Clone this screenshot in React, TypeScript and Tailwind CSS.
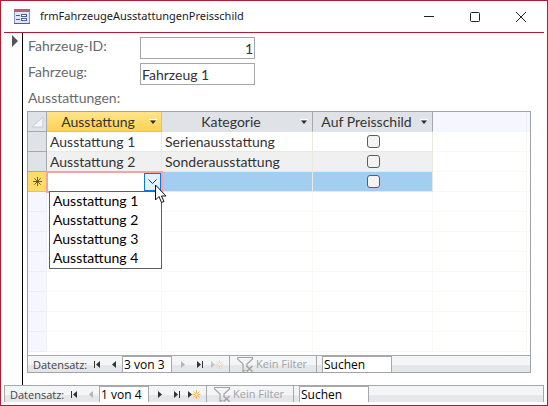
import { useState } from "react";

const options = [
  "Ausstattung 1",
  "Ausstattung 2",
  "Ausstattung 3",
  "Ausstattung 4",
];

const rows = [
  { name: "Ausstattung 1", category: "Serienausstattung" },
  { name: "Ausstattung 2", category: "Sonderausstattung" },
];

const emptyRows = [1, 2, 3, 4, 5, 6, 7, 8];

const FormIcon = () => (
  <svg width="16" height="16" viewBox="0 0 16 16">
    <rect x="0" y="0" width="16" height="15" fill="#8695bb" />
    <rect x="0" y="0" width="16" height="3" fill="#c9567f" />
    <rect x="1" y="3" width="14" height="11" fill="#dfe7f6" />
    <path d="M2 6.500h4M2 10.500h4" stroke="#4a5f96" />
    <rect x="7.500" y="5.500" width="5" height="2" fill="#fff" stroke="#4c6199" />
    <rect x="7.500" y="9.500" width="5" height="2" fill="#fff" stroke="#4c6199" />
    <rect x="0" y="14" width="16" height="1" fill="#4d5f8e" />
  </svg>
);

const SortArrow = () => (
  <svg width="8" height="6" viewBox="0 0 8 6">
    <path d="M0 0.5h8" stroke="#fff" />
    <path d="M1 1.500h6L4 5z" fill="#222b3a" />
  </svg>
);

const NewRecordIcon = ({ disabled }: { disabled?: boolean }) => (
  <svg width="13" height="9" viewBox="0 0 13 9" opacity={disabled ? 0.4 : 1}>
    <path d="M0 1v7l4-3.500z" fill={disabled ? "#888" : "#333"} />
    <path
      d="M8.500 0v9M4.500 4.500h8M5.500 1.500l6 6M11.500 1.500l-6 6"
      stroke="#e8b056"
      strokeWidth="0.900"
    />
    <circle cx="8.500" cy="4.500" r="1.600" fill="#fff3d0" stroke="#e8b056" strokeWidth="0.600" />
  </svg>
);

const FilterIcon = () => (
  <svg width="17" height="16" viewBox="0 0 17 16" fill="none">
    <path
      d="M0.500 1.500h15v1.500l-5.500 5v2M0.500 1.500v1.500l5.500 5v7.500l2.500-1.500"
      stroke="#a3a3a3"
      strokeWidth="1.200"
    />
    <path d="M9.500 10l6 5.500M15.500 10l-6 5.500" stroke="#a3a3a3" strokeWidth="1.600" />
  </svg>
);

type NavigatorProps = {
  id: string;
  position: string;
  atStart?: boolean;
  atEnd?: boolean;
};

const RecordNavigator = ({ id, position, atStart, atEnd }: NavigatorProps) => {
  const [record, setRecord] = useState(position);
  const [search, setSearch] = useState("Suchen");

  return (
    <div className="flex h-4 items-stretch overflow-hidden bg-linear-to-b from-[#f3f5f7] from-55% to-[#e4e6ea] to-60% font-['Open_Sans',sans-serif] text-[11px] leading-[18px]">
      <label htmlFor={`${id}-record`} className="w-[66px] shrink-0 pl-[5px] text-[#444]">
        Datensatz:
      </label>
      <button type="button" aria-label="Erster Datensatz" className="flex w-4 shrink-0 items-center">
        <svg width="7" height="7" viewBox="0 0 7 7">
          <path d="M0 0h1v7H0zM6 0v7L2 3.500z" fill="#333" />
        </svg>
      </button>
      <button type="button" aria-label="Vorheriger Datensatz" className="flex w-3 shrink-0 items-center pl-[2px]">
        <svg width="4" height="7" viewBox="0 0 4 7">
          <path d="M4 0v7L0 3.500z" fill={atStart ? "#b5b5b5" : "#333"} />
        </svg>
      </button>
      <input
        id={`${id}-record`}
        value={record}
        onChange={(e) => setRecord(e.target.value)}
        className="h-[17px] w-[50px] shrink-0 border border-[#a6a8ac] bg-white px-px text-[12px] text-black outline-none"
      />
      <button type="button" aria-label="Nächster Datensatz" className="flex w-[25px] shrink-0 items-center pl-[9px]">
        <svg width="4" height="7" viewBox="0 0 4 7">
          <path d="M0 0v7l4-3.500z" fill={atEnd ? "#b5b5b5" : "#333"} />
        </svg>
      </button>
      <button type="button" aria-label="Letzter Datensatz" className="flex w-[14px] shrink-0 items-center">
        <svg width="7" height="7" viewBox="0 0 7 7">
          <path d="M0 0v7l4-3.500zM5 0h1v7H5z" fill="#333" />
        </svg>
      </button>
      <button type="button" aria-label="Neuer Datensatz" className="flex w-[18px] shrink-0 items-center">
        <NewRecordIcon disabled={atEnd} />
      </button>
      <button
        type="button"
        className="flex w-[88px] shrink-0 items-center gap-[2px] border-x border-[#a6a8ac] pl-[7px] text-[#a3a3a3]"
      >
        <FilterIcon />
        <span className="whitespace-nowrap">Kein Filter</span>
      </button>
      <input
        aria-label="Suchen"
        value={search}
        onChange={(e) => setSearch(e.target.value)}
        className="ml-[5px] h-[17px] w-[70px] shrink-0 border border-[#a6a8ac] bg-white px-px text-[12px] text-black outline-none"
      />
    </div>
  );
};

const ColumnHeader = ({ label, active }: { label: string; active?: boolean }) => (
  <th
    scope="col"
    className={`h-5 border-r border-b p-0 font-normal ${
      active
        ? "border-[#d9c374] bg-linear-to-b from-[#ffe48a] to-[#ffd24d]"
        : "border-r-[#a6a8ac] border-b-[#dfe3e8] bg-[#dfe3e8]"
    }`}
  >
    <button type="button" className="flex h-[19px] w-full items-center pr-1">
      <span className="flex-1 text-center whitespace-nowrap">{label}</span>
      <SortArrow />
    </button>
  </th>
);

const cell = "h-5 border-r border-b border-[#ebe8dc] p-0";
const faint = "h-5 border-r border-b border-[#f8f8f4] p-0";
const checkbox =
  "block mx-auto size-[13px] appearance-none rounded-[3px] border border-[#5c5c5c] bg-[#f3f3f3]";

const EquipmentTable = () => {
  const [value, setValue] = useState("");

  return (
    <table className="w-full table-fixed border-separate border-spacing-0 text-[14px] leading-[19px] text-[#333]">
      <colgroup>
        <col className="w-[19px]" />
        <col className="w-[115px]" />
        <col className="w-[151px]" />
        <col className="w-[120px]" />
        <col />
        <col className="w-[3px]" />
      </colgroup>
      <thead>
        <tr>
          <th className="h-5 border-r border-b border-[#a6a8ac] bg-[#dfe3e8] p-0">
            <svg width="18" height="19" viewBox="0 0 18 19">
              <path d="M15 5v10H4z" fill="#f3f6fa" stroke="#c3cbd6" />
            </svg>
          </th>
          <ColumnHeader label="Ausstattung" active />
          <ColumnHeader label="Kategorie" />
          <ColumnHeader label="Auf Preisschild" />
          <th className="border-r border-[#ededf2] bg-[#f6f6fe] p-0" />
          <th className="bg-[#f6f6fe] p-0" />
        </tr>
      </thead>
      <tbody>
        {rows.map((row) => (
          <tr key={row.name} className="group">
            <td className="h-5 border-r border-b border-[#a6a8ac] bg-[#dfe3e8] p-0" />
            <td className={`${cell} pl-[3px] group-even:bg-[#f0f0f0]`}>{row.name}</td>
            <td className={`${cell} pl-[3px] group-even:bg-[#f0f0f0]`}>{row.category}</td>
            <td className={`${cell} pl-[2px] group-even:bg-[#f0f0f0]`}>
              <input type="checkbox" aria-label={`${row.name} auf Preisschild`} className={checkbox} />
            </td>
            <td className={faint} />
            <td className="border-b border-[#f8f8f4] p-0" />
          </tr>
        ))}

        {/* New record */}
        <tr>
          <td className="h-5 border-r border-b border-[#d9c374] bg-[#ffdc66] p-0">
            <svg width="18" height="19" viewBox="0 0 18 19">
              <path
                d="M9.500 5v9M5 9.500h9M6.300 6.300l6.400 6.400M12.700 6.300l-6.400 6.400"
                stroke="#5a5236"
                strokeWidth="0.900"
              />
            </svg>
          </td>
          <td className="relative h-5 p-0">
            <div className="absolute -inset-px z-10 flex border-2 border-[#f7a1a8] bg-white">
              <input
                aria-label="Ausstattung"
                value={value}
                onChange={(e) => setValue(e.target.value)}
                className="min-w-0 flex-1 px-px outline-none"
              />
              <button
                type="button"
                aria-label="Liste öffnen"
                className="flex w-[17px] items-center justify-center border border-[#0f78d4] bg-[#e3f1fb]"
              >
                <svg width="9" height="6" viewBox="0 0 9 6" fill="none">
                  <path d="M0.500 0.500l4 4 4-4" stroke="#333" />
                </svg>
              </button>
            </div>
            <select
              size={4}
              aria-label="Ausstattung auswählen"
              onChange={(e) => setValue(e.target.value)}
              className="absolute top-[19px] left-[2px] z-20 h-[78px] w-[113px] overflow-hidden border border-[#5f5f5f] bg-white text-black outline-none"
            >
              {options.map((option) => (
                <option key={option} className="h-[19px] min-h-0 p-0 pl-[3px] leading-[20px]">
                  {option}
                </option>
              ))}
            </select>
            <svg
              width="13"
              height="20"
              viewBox="0 0 13 20"
              className="pointer-events-none absolute top-3 left-[108px] z-30"
            >
              <path
                d="M0.500 1v15l3.500-3.500 2.500 6 2.500-1-2.500-5.500h4.500z"
                fill="#fff"
                stroke="#111"
              />
            </svg>
          </td>
          <td className={`${cell} bg-[#a3cef1]`} />
          <td className={`${cell} bg-[#a3cef1] pl-[2px]`}>
            <input type="checkbox" aria-label="Neuer Datensatz auf Preisschild" className={checkbox} />
          </td>
          <td className={faint} />
          <td className="border-b border-[#f8f8f4] p-0" />
        </tr>

        {emptyRows.map((n) => (
          <tr key={n}>
            <td className="h-5 border-r border-b border-[#ededf2] bg-[#f6f6fe] p-0" />
            <td className={faint} />
            <td className={faint} />
            <td className={faint} />
            <td className={faint} />
            <td className="border-b border-[#f8f8f4] p-0" />
          </tr>
        ))}
      </tbody>
    </table>
  );
};

const App = () => {
  const [id, setId] = useState("1");
  const [vehicle, setVehicle] = useState("Fahrzeug 1");

  return (
    <div className="flex min-h-screen flex-col border border-[#b01e32] bg-white px-[3px] pb-[3px] font-[Lato,sans-serif]">
      {/* Title bar */}
      <header className="flex h-8 items-center border-b border-[#b01e32] pl-[10px]">
        <FormIcon />
        <h1 className="ml-[10px] flex-1 font-['Noto_Sans',sans-serif] text-[11px] text-[#1a1a1a]">
          frmFahrzeugeAusstattungenPreisschild
        </h1>
        <button type="button" aria-label="Minimieren" className="flex w-[46px] justify-center">
          <svg width="10" height="10" viewBox="0 0 10 10">
            <path d="M0 4.500h10" stroke="#222" />
          </svg>
        </button>
        <button type="button" aria-label="Maximieren" className="flex w-[46px] justify-center">
          <svg width="10" height="10" viewBox="0 0 10 10" fill="none">
            <rect x="0.500" y="0.500" width="9" height="9" rx="1" stroke="#222" />
          </svg>
        </button>
        <button type="button" aria-label="Schließen" className="flex w-[46px] justify-center">
          <svg width="10" height="10" viewBox="0 0 10 10">
            <path d="M0 0l10 10M10 0L0 10" stroke="#222" />
          </svg>
        </button>
      </header>

      <div className="flex flex-1">
        {/* Record selector */}
        <div className="w-[19px] shrink-0 border-r border-black pt-[2px] pl-2">
          <svg width="6" height="12" viewBox="0 0 6 12">
            <path d="M0 0v12l6-6z" fill="#555" />
          </svg>
        </div>

        <main className="flex min-w-0 flex-1 flex-col pt-1 pr-[13px] pb-3 pl-1">
          <div className="flex flex-col gap-1 pl-px text-[14px] leading-[18px] text-[#6a6a6a]">
            <div className="flex h-[22px] items-start">
              <label htmlFor="vehicle-id" className="w-28">
                Fahrzeug-ID:
              </label>
              <input
                id="vehicle-id"
                value={id}
                onChange={(e) => setId(e.target.value)}
                className="h-[22px] w-[115px] border border-[#a5a5a5] px-px text-right text-[#333] outline-none"
              />
            </div>
            <div className="flex h-[22px] items-start">
              <label htmlFor="vehicle" className="w-28">
                Fahrzeug:
              </label>
              <input
                id="vehicle"
                value={vehicle}
                onChange={(e) => setVehicle(e.target.value)}
                className="h-[22px] w-[115px] border border-[#a5a5a5] px-px text-[#333] outline-none"
              />
            </div>
            <h2 className="h-[22px]">Ausstattungen:</h2>
          </div>

          {/* Subform */}
          <section className="flex flex-1 flex-col border border-[#a0a3a8]">
            <div className="flex-1">
              <EquipmentTable />
            </div>
            <div className="border-t border-[#a6a8ac]">
              <RecordNavigator id="equipment" position="3 von 3" atEnd />
            </div>
          </section>
        </main>
      </div>

      <footer className="border-t border-r border-l border-[#a6a8ac]">
        <RecordNavigator id="vehicles" position="1 von 4" atStart />
      </footer>
    </div>
  );
};

export default App;
